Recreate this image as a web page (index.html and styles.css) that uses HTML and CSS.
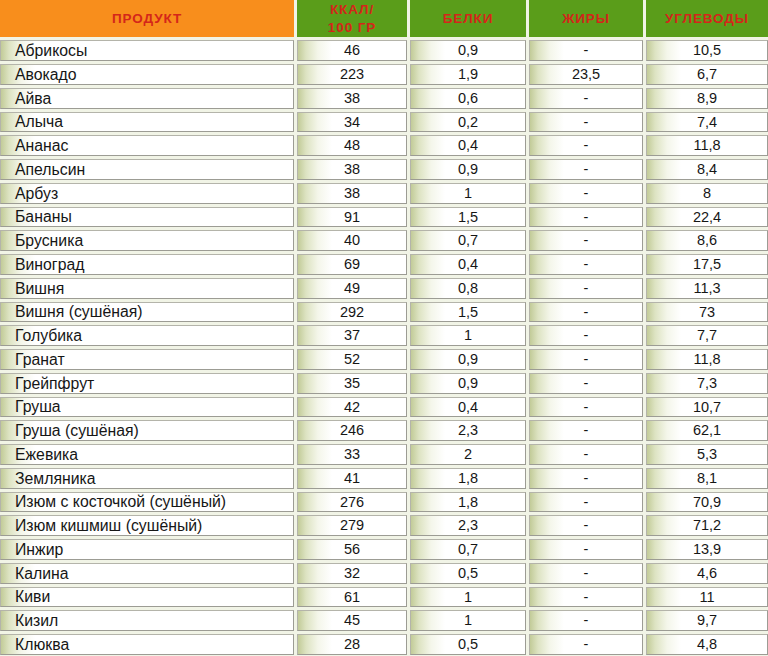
FILE: index.html
```html
<!DOCTYPE html>
<html lang="ru">
<head>
<meta charset="utf-8">
<link rel="stylesheet" href="styles.css">
</head>
<body>
<div class="table">
  <div class="h h-orange">ПРОДУКТ</div>
  <div class="h h-green">ККАЛ/<br>100 ГР</div>
  <div class="h h-green">БЕЛКИ</div>
  <div class="h h-green">ЖИРЫ</div>
  <div class="h h-green">УГЛЕВОДЫ</div>

  <div class="c name">Абрикосы</div><div class="c">46</div><div class="c">0,9</div><div class="c">-</div><div class="c">10,5</div>
  <div class="c name">Авокадо</div><div class="c">223</div><div class="c">1,9</div><div class="c">23,5</div><div class="c">6,7</div>
  <div class="c name">Айва</div><div class="c">38</div><div class="c">0,6</div><div class="c">-</div><div class="c">8,9</div>
  <div class="c name">Алыча</div><div class="c">34</div><div class="c">0,2</div><div class="c">-</div><div class="c">7,4</div>
  <div class="c name">Ананас</div><div class="c">48</div><div class="c">0,4</div><div class="c">-</div><div class="c">11,8</div>
  <div class="c name">Апельсин</div><div class="c">38</div><div class="c">0,9</div><div class="c">-</div><div class="c">8,4</div>
  <div class="c name">Арбуз</div><div class="c">38</div><div class="c">1</div><div class="c">-</div><div class="c">8</div>
  <div class="c name">Бананы</div><div class="c">91</div><div class="c">1,5</div><div class="c">-</div><div class="c">22,4</div>
  <div class="c name">Брусника</div><div class="c">40</div><div class="c">0,7</div><div class="c">-</div><div class="c">8,6</div>
  <div class="c name">Виноград</div><div class="c">69</div><div class="c">0,4</div><div class="c">-</div><div class="c">17,5</div>
  <div class="c name">Вишня</div><div class="c">49</div><div class="c">0,8</div><div class="c">-</div><div class="c">11,3</div>
  <div class="c name">Вишня (сушёная)</div><div class="c">292</div><div class="c">1,5</div><div class="c">-</div><div class="c">73</div>
  <div class="c name">Голубика</div><div class="c">37</div><div class="c">1</div><div class="c">-</div><div class="c">7,7</div>
  <div class="c name">Гранат</div><div class="c">52</div><div class="c">0,9</div><div class="c">-</div><div class="c">11,8</div>
  <div class="c name">Грейпфрут</div><div class="c">35</div><div class="c">0,9</div><div class="c">-</div><div class="c">7,3</div>
  <div class="c name">Груша</div><div class="c">42</div><div class="c">0,4</div><div class="c">-</div><div class="c">10,7</div>
  <div class="c name">Груша (сушёная)</div><div class="c">246</div><div class="c">2,3</div><div class="c">-</div><div class="c">62,1</div>
  <div class="c name">Ежевика</div><div class="c">33</div><div class="c">2</div><div class="c">-</div><div class="c">5,3</div>
  <div class="c name">Земляника</div><div class="c">41</div><div class="c">1,8</div><div class="c">-</div><div class="c">8,1</div>
  <div class="c name">Изюм с косточкой (сушёный)</div><div class="c">276</div><div class="c">1,8</div><div class="c">-</div><div class="c">70,9</div>
  <div class="c name">Изюм кишмиш (сушёный)</div><div class="c">279</div><div class="c">2,3</div><div class="c">-</div><div class="c">71,2</div>
  <div class="c name">Инжир</div><div class="c">56</div><div class="c">0,7</div><div class="c">-</div><div class="c">13,9</div>
  <div class="c name">Калина</div><div class="c">32</div><div class="c">0,5</div><div class="c">-</div><div class="c">4,6</div>
  <div class="c name">Киви</div><div class="c">61</div><div class="c">1</div><div class="c">-</div><div class="c">11</div>
  <div class="c name">Кизил</div><div class="c">45</div><div class="c">1</div><div class="c">-</div><div class="c">9,7</div>
  <div class="c name">Клюква</div><div class="c">28</div><div class="c">0,5</div><div class="c">-</div><div class="c">4,8</div>
</div>
</body>
</html>
```
FILE: styles.css
```css
html, body {
  margin: 0;
  padding: 0;
  background: #f1f4e6;
}
.table {
  display: grid;
  grid-template-columns: 294px 110px 116px 114px 122px;
  grid-template-rows: 37px;
  grid-auto-rows: 21px 21px 21px 20px;
  column-gap: 3px;
  row-gap: 3px;
  width: 768px;
  font-family: "Liberation Sans", Arial, sans-serif;
}
.h {
  display: flex;
  align-items: center;
  justify-content: center;
  text-align: center;
  color: #d4261a;
  font-weight: bold;
  font-size: 13.5px;
  line-height: 18px;
  letter-spacing: 0.9px;
}
.h-orange {
  background: #f88e1c;
}
.h-green {
  background: #5a9d1a;
}
.c {
  box-sizing: border-box;
  border: 1px solid #9c9c94;
  border-top-color: #b4b4aa;
  border-left-color: #b4b4aa;
  background: linear-gradient(to right, #c2cb98 0px, #dde3c2 8px, #f4f6ea 20px, #ffffff 34px);
  display: flex;
  align-items: center;
  justify-content: center;
  font-size: 14.5px;
  color: #161616;
  line-height: 1;
  white-space: nowrap;
}
.c.name {
  justify-content: flex-start;
  padding-left: 14px;
  font-size: 15.8px;
}
```
